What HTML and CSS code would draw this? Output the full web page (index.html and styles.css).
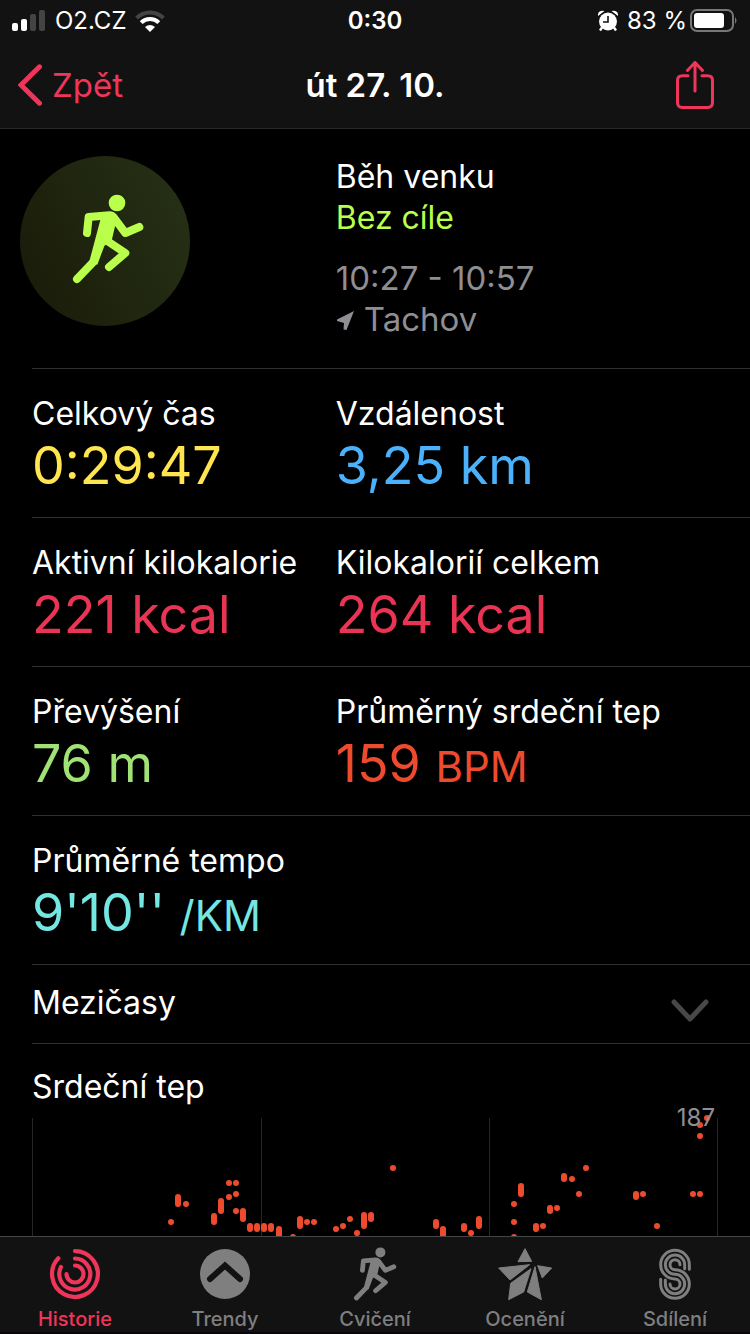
FILE: index.html
```html
<!DOCTYPE html>
<html lang="cs">
<head>
<meta charset="utf-8">
<meta name="viewport" content="width=device-width, initial-scale=1">
<title>út 27. 10.</title>
<link rel="stylesheet" href="styles.css">
</head>
<body>
<svg class="defs" aria-hidden="true">
  <symbol id="runner" viewBox="216 162 216 270">
    <circle cx="351" cy="189" r="25" fill="currentColor"/>
    <path d="M302 236 322 216 352 230 346 255 336 298 313 318 292 374 268 364Z" fill="currentColor"/>
    <g fill="none" stroke="currentColor" stroke-width="24" stroke-linecap="round" stroke-linejoin="round">
      <path d="M261 279 266 231 328 226Q338 226 344 236L376 279 418 261"/>
      <path d="M280 366 231 417M322 303 376 339 327 381"/>
    </g>
  </symbol>
</svg>
<div class="app">
  <header class="top">
    <div class="status">
      <div class="status-side">
        <svg class="signal" viewBox="0 0 34 22" aria-hidden="true"><rect y="13" width="6" height="8" rx="2" fill="#fff"/><rect x="9" y="9" width="6" height="12" rx="2" fill="#fff"/><rect x="18" y="4" width="6" height="17" rx="2" fill="#444"/><rect x="27" width="6" height="21" rx="2" fill="#444"/></svg>
        <span class="carrier">O2.CZ</span>
        <svg class="wifi" viewBox="0 0 30 22" aria-hidden="true"><g fill="none" stroke-width="4"><path d="M1.600 8A19 19 0 0 1 28.400 8" stroke="#444"/><path d="M6.200 12.600A12.500 12.500 0 0 1 23.800 12.600" stroke="#fff"/></g><path d="M10 17Q15 13 20 17L15 22Z" fill="#fff"/></svg>
      </div>
      <span class="clock">0:30</span>
      <div class="status-side status-end">
        <svg class="alarm" viewBox="0 0 20 22" aria-hidden="true"><circle cx="10" cy="11.500" r="9" fill="#fff"/><path d="M0 6Q-.5 0 6.500 1ZM20 6Q20.500 0 13.500 1Z" fill="#fff"/><path d="M4 17.500 2 20.500M16 17.500 18 20.500" stroke="#fff" stroke-width="2.400" fill="none"/><path d="M10 6V12H5" stroke="#121212" stroke-width="1.600" fill="none"/></svg>
        <span class="charge">83 %<svg class="battery" viewBox="0 0 48 24" aria-hidden="true"><rect x="1" y="1" width="42" height="21" rx="6" fill="none" stroke="#777" stroke-width="2"/><rect x="4" y="4" width="30" height="15" rx="3" fill="#fff"/><path d="M45 8Q48 11.500 45 15Z" fill="#777"/></svg></span>
      </div>
    </div>
    <nav class="nav">
      <button class="back" type="button"><svg class="back-icon" viewBox="0 0 24 42" aria-hidden="true"><path d="M21.500 2.800 3 21 21.500 39.200" fill="none" stroke="currentColor" stroke-width="5" stroke-linecap="round"/></svg>Zpět</button>
      <h1 class="title">út 27. 10.</h1>
      <button class="share" type="button" aria-label="Sdílet"><svg class="share-icon" viewBox="0 0 38 48" aria-hidden="true"><g fill="none" stroke="currentColor" stroke-width="3" stroke-linecap="round"><path d="M12 14.700H6.500Q1.500 14.700 1.500 19.500V41.500Q1.500 46.500 6.500 46.500H31.500Q36.500 46.500 36.500 41.500V19.500Q36.500 14.700 31.500 14.700H26M19 30V2M11.500 9.500 19 1.500 26.500 9.500"/></g></svg></button>
    </nav>
  </header>

  <main class="content">
    <section class="hero">
      <div class="badge"><svg class="badge-icon" aria-hidden="true"><use href="#runner"/></svg></div>
      <div class="summary">
        <p>Běh venku</p>
        <p class="goal">Bez cíle</p>
        <p class="muted time">10:27 - 10:57</p>
        <p class="muted place"><svg class="place-icon" viewBox="0 0 18 20" aria-hidden="true"><path d="M18 1 10.500 20 7.500 19.500 8 13 1 11V9.500Z" fill="currentColor"/></svg>Tachov</p>
      </div>
    </section>
    <section class="row">
      <div><h2>Celkový čas</h2><p class="value yellow">0:29:47</p></div>
      <div><h2>Vzdálenost</h2><p class="value blue">3,25 km</p></div>
    </section>
    <section class="row">
      <div><h2>Aktivní kilokalorie</h2><p class="value pink">221 kcal</p></div>
      <div><h2>Kilokalorií celkem</h2><p class="value pink">264 kcal</p></div>
    </section>
    <section class="row">
      <div><h2>Převýšení</h2><p class="value green">76 m</p></div>
      <div><h2>Průměrný srdeční tep</h2><p class="value orange">159 <span class="unit">BPM</span></p></div>
    </section>
    <section class="row">
      <div><h2>Průměrné tempo</h2><p class="value cyan">9'10'' <span class="unit">/KM</span></p></div>
    </section>
    <button class="splits" type="button" aria-expanded="false">Mezičasy<svg class="splits-icon" viewBox="0 0 38 24" aria-hidden="true"><path d="M3 3 19 20 35 3" fill="none" stroke="#48484a" stroke-width="5" stroke-linecap="round" stroke-linejoin="round"/></svg></button>
    <section class="heart">
      <h2>Srdeční tep</h2>
      <div class="chart">
        <svg class="plot" viewBox="0 0 686 240" role="img" aria-label="Srdeční tep">
          <path d="M.5 0V240M229.500 0V240M457.500 0V240M685.500 0V240" stroke="#262628"/>
          <path d="M139 104v.01M146 79V86M154 86v.01M182 98V104M189 83V93M197 65v.01M204 65v.01M197 79v.01M204 76v.01M204 93v.01M211 93V101M218 108V111M225 108V111M232 108V111M239 108V111M247 111V125M261 119v.01M268 101V108M275 104v.01M282 104v.01M304 111v.01M311 108v.01M318 101v.01M325 115v.01M332 97V108M339 97V101M361 50v.01M404 104V108M411 111V125M432 108V111M439 115v.01M447 101V108M482 86v.01M482 104v.01M482 119v.01M489 68V76M504 108V111M511 108v.01M518 90V93M525 90v.01M532 58V61M540 61v.01M547 76v.01M554 50v.01M604 76V79M611 76v.01M625 108v.01M661 76v.01M668 76v.01M668 18v.01M668 7v.01M675 0v.01" stroke="#ee4b2e" stroke-width="6" stroke-linecap="round"/>
        </svg>
        <span class="peak">187</span>
      </div>
    </section>
  </main>

  <nav class="tabs">
    <a class="tab active" href="#historie" aria-current="page"><svg class="tab-icon" viewBox="0 0 54 54" aria-hidden="true"><g fill="none" stroke="currentColor" stroke-width="4.200" stroke-linecap="round"><path d="M27 4.100A22.900 22.900 0 1 1 10.300 11.300"/><path d="M27 11.500A15.500 15.500 0 1 1 13 20"/><path d="M27 18.500A8.500 8.500 0 1 1 18.500 27"/></g></svg>Historie</a>
    <a class="tab" href="#trendy"><svg class="tab-icon" viewBox="0 0 54 54" aria-hidden="true"><circle cx="27" cy="27" r="25" fill="currentColor"/><path d="M12 32 27 18.500 42 32" fill="none" stroke="#121212" stroke-width="6" stroke-linecap="round"/></svg>Trendy</a>
    <a class="tab" href="#cviceni"><svg class="tab-icon" aria-hidden="true"><use href="#runner"/></svg>Cvičení</a>
    <a class="tab" href="#oceneni"><svg class="tab-icon" viewBox="369 53 162 162" aria-hidden="true"><g fill="currentColor" stroke="currentColor" stroke-width="3" stroke-linejoin="round"><path d="M450 58 470 96 429 97Z"/><path d="M371 116 464 106 405 152Z"/><path d="M468 118 446 188 401 211 407 162Z"/><path d="M480 112 499 211 457 188Z"/><path d="M488 109 530 116 502 146Z"/></g></svg>Ocenění</a>
    <a class="tab" href="#sdileni"><svg class="tab-icon" viewBox="-8 19 160 162" aria-hidden="true"><g fill="none" stroke="currentColor" stroke-width="9" stroke-linecap="round"><path d="M115 86V72A43 43 0 1 0 72 115A15 15 0 1 1 57 130"/><path d="M101 84V72A29 29 0 1 0 72 101A29 29 0 1 1 43 130V118"/><path d="M29 116V130A43 43 0 1 0 72 87A15 15 0 1 1 87 72"/></g></svg>Sdílení</a>
  </nav>
</div>
</body>
</html>
```
FILE: styles.css
```css
* { box-sizing: border-box; }
body { margin: 0; background: #000; color: #fff; font: 400 32px/40px Inter, "Noto Sans", sans-serif; }
h1, h2, p { margin: 0; font: inherit; }
button { padding: 0; border: 0; background: none; color: inherit; font: inherit; }
svg { display: block; flex: none; }
.defs { position: absolute; width: 0; height: 0; }
.app { display: flex; flex-direction: column; height: 100vh; }

.top { flex: none; background: #121212; border-bottom: 1px solid #29292b; }
.status { display: grid; grid-template-columns: 1fr auto 1fr; align-items: center; height: 41px; padding: 0 12px; font-size: 24px; }
.status-side { display: flex; align-items: center; gap: 9px; }
.status-end { justify-content: flex-end; }
.charge { display: flex; align-items: center; gap: 3px; }
.clock { font-weight: 600; }
.signal { width: 34px; height: 22px; }
.wifi { width: 30px; height: 22px; }
.alarm { width: 20px; height: 22px; }
.battery { width: 48px; height: 24px; }
.nav { display: grid; grid-template-columns: 1fr auto 1fr; align-items: center; height: 87px; padding: 0 36px 0 18px; font-size: 33px; }
.back { display: flex; align-items: center; gap: 10px; justify-self: start; color: #f0355a; }
.back-icon { width: 24px; height: 42px; }
.title { padding-left: 18px; font-weight: 600; }
.share { justify-self: end; color: #f0355a; }
.share-icon { width: 38px; height: 48px; }

.content { flex: 1; min-height: 0; overflow-y: auto; scrollbar-width: none; padding-left: 32px; }
.hero, .row { display: grid; grid-template-columns: 11fr 15fr; border-bottom: 1px solid #303032; }
.hero { padding: 27px 0 28px; }
.badge { display: grid; place-items: center; width: 170px; height: 170px; margin-left: -12px; padding: 0 0 4px 6px; border-radius: 50%; background: linear-gradient(65deg, #191a08, #273217); color: #b9ff4b; }
.badge-icon { width: 72px; height: 90px; }
.summary { line-height: 41px; }
.goal { color: #b9ff4b; }
.muted { color: #8e8e93; font-size: 33px; }
.time { margin-top: 20px; }
.place { display: flex; align-items: center; gap: 10px; }
.place-icon { width: 18px; height: 20px; }
.row { padding: 25px 0 19px; }
.value { font-size: 52px; line-height: 64px; }
.unit { font-size: 42px; line-height: 1; }
.yellow { color: #ffe550; }
.blue { color: #4cb1fb; }
.pink { color: #e93454; }
.green { color: #a0e275; }
.orange { color: #ee4b2e; }
.cyan { color: #74e7e3; }
.splits { display: flex; justify-content: space-between; align-items: flex-end; width: 100%; padding: 18px 41px 20px 0; border-bottom: 1px solid #303032; }
.splits-icon { width: 38px; height: 24px; }
.heart { padding: 23px 32px 0 0; }
.chart { position: relative; margin-top: 11px; }
.plot { width: 100%; overflow: visible; }
.peak { position: absolute; top: -16px; right: 3px; color: #8e8e93; font-size: 24px; line-height: 32px; }

.tabs { flex: none; display: grid; grid-template-columns: repeat(5, 1fr); background: #121212; border-top: 1px solid #454547; border-bottom: 2px solid #08060a; }
.tab { display: flex; flex-direction: column; align-items: center; gap: 6px; padding: 10px 0 1px; color: #7f7f7f; font-size: 20px; line-height: 24px; font-weight: 500; text-decoration: none; }
.tab.active { color: #f0355a; }
.tab-icon { width: 54px; height: 54px; }
```
